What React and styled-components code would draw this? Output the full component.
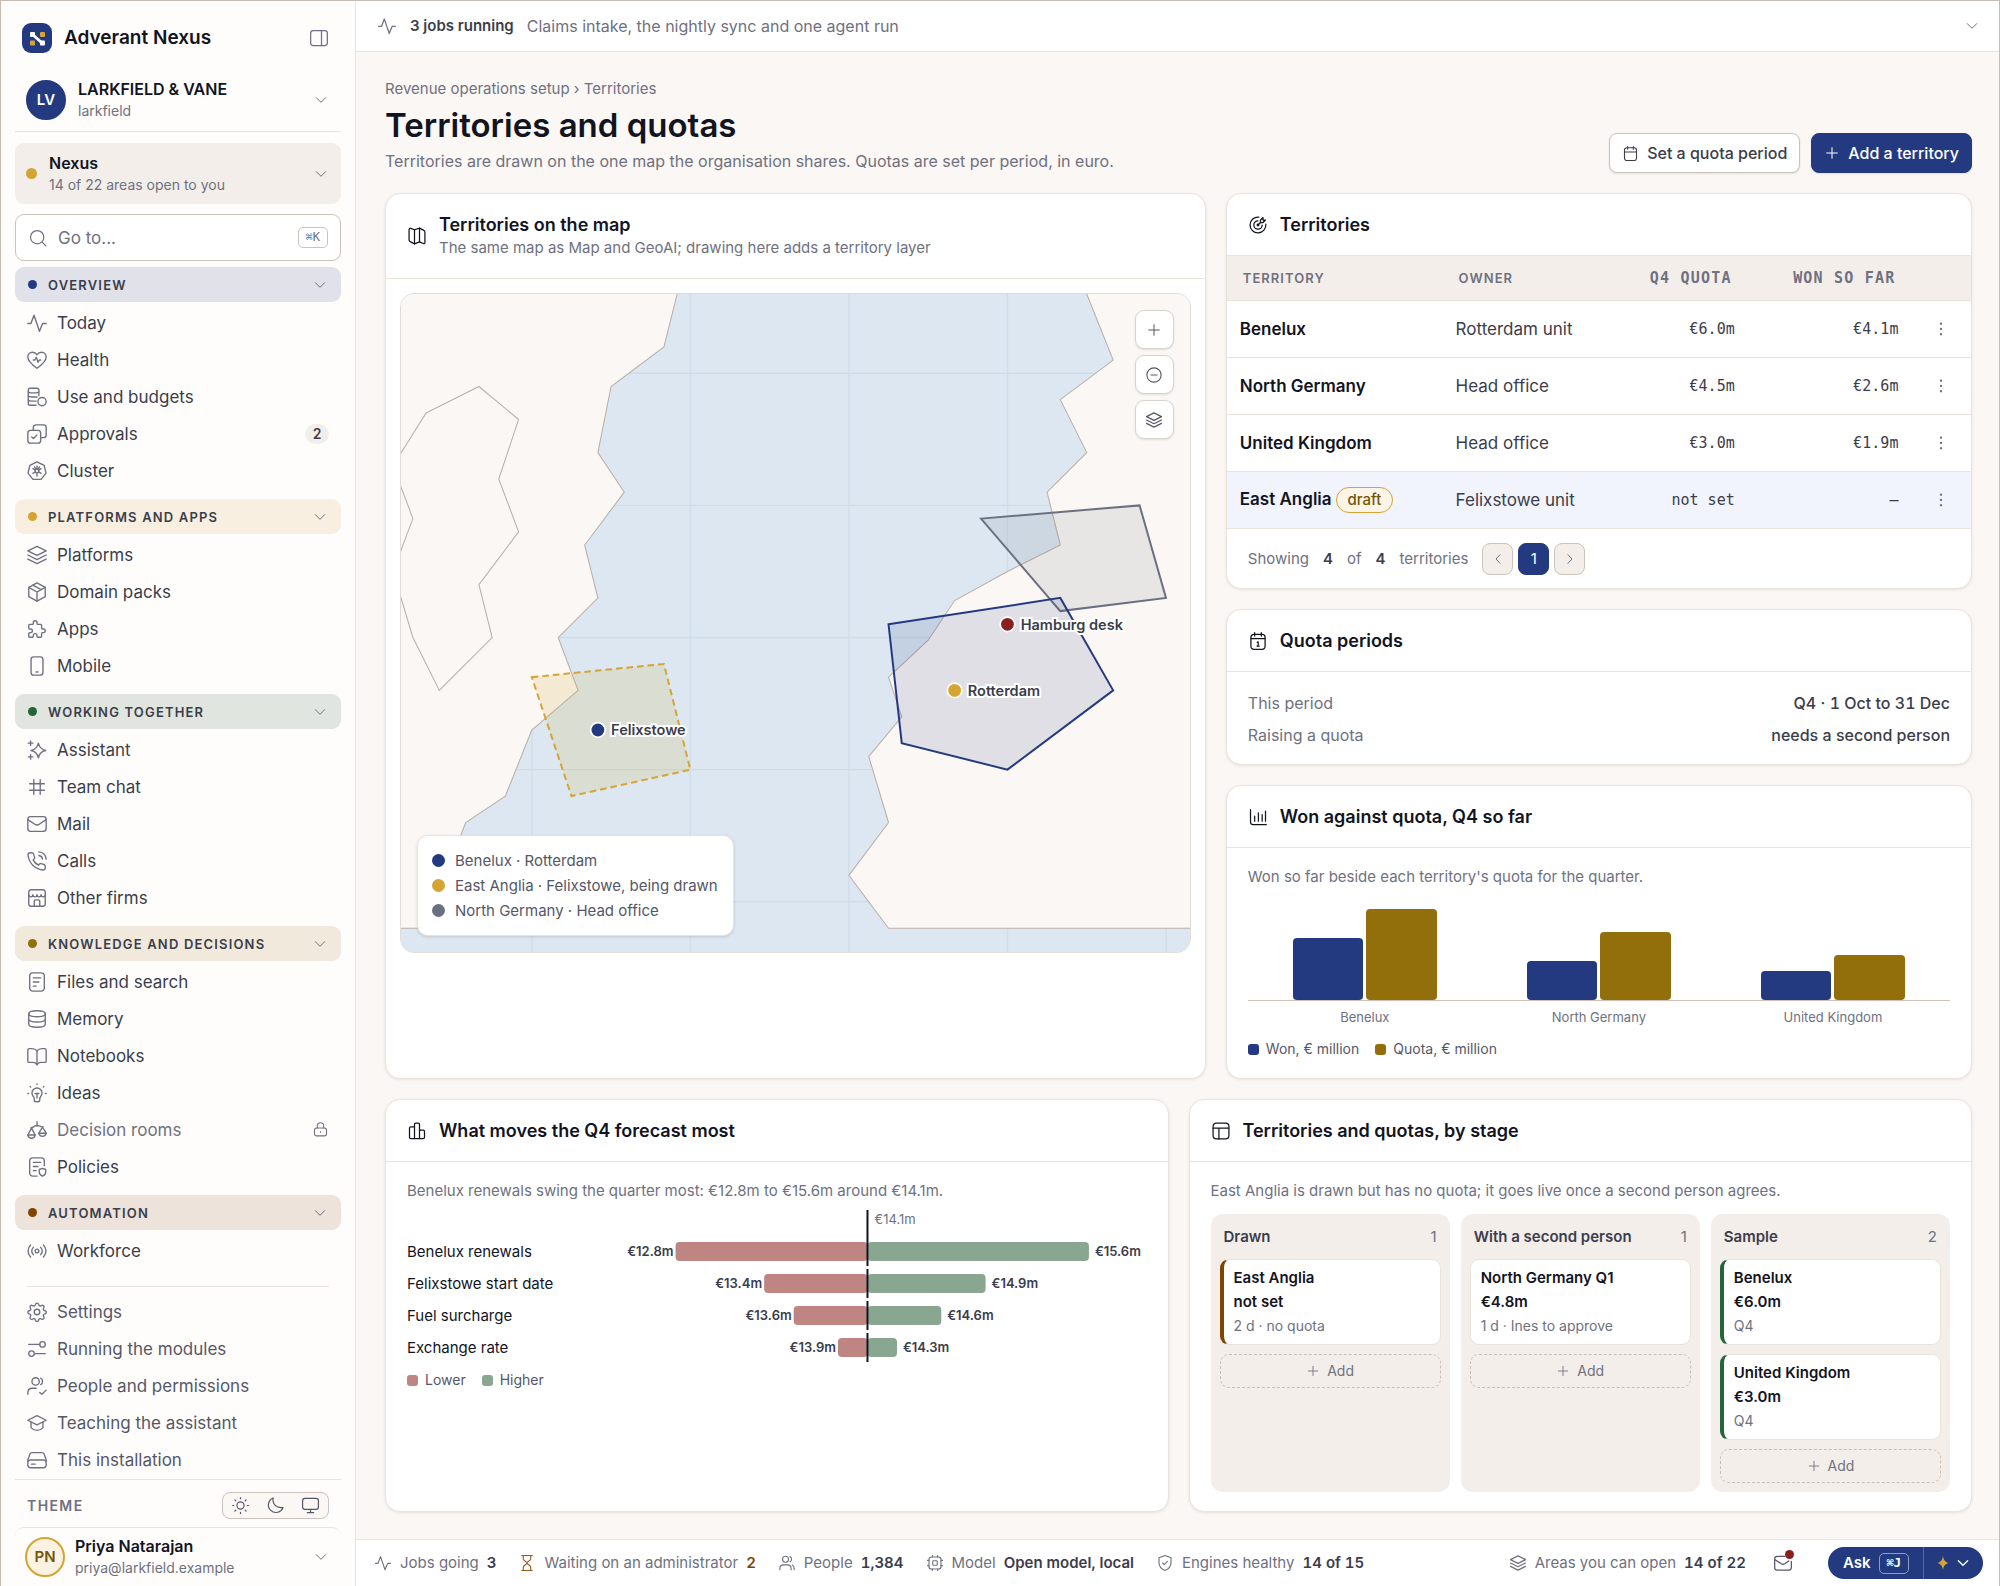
import React from "react";
import styled, { createGlobalStyle, css } from "styled-components";

const color = {
  ink: "#12141f",
  text: "#3b3d4b",
  soft: "#555766",
  muted: "#6f7180",
  line: "#e9e3de",
  lineStrong: "#cbc3bb",
  page: "#fbf7f4",
  panel: "#fefdfb",
  sunken: "#f3eeea",
  navy: "#243a80",
  gold: "#d4a533",
  olive: "#936f0b",
  green: "#24663a",
  brown: "#804300",
  slate: "#6b7080",
  red: "#8b1f1f",
};

const mono = `"DejaVu Sans Mono", "Liberation Mono", monospace`;

const GlobalStyle = createGlobalStyle`
  *, *::before, *::after { box-sizing: border-box; }
  body {
    margin: 0;
    background: ${color.page};
    color: ${color.text};
    font-family: Inter, "Liberation Sans", sans-serif;
    font-size: 16px;
    line-height: 24px;
  }
  button, input { font: inherit; color: inherit; }
  button { cursor: pointer; padding: 0; }
  h1, h2, h3, p, ul, dl, dd, table { margin: 0; padding: 0; }
  ul { list-style: none; }
  a { color: inherit; text-decoration: none; }
`;

/* ---------- icons ---------- */

const dot = (x, y, r = 1) => `M${x - r} ${y}a${r} ${r} 0 1 0 ${r * 2} 0a${r} ${r} 0 1 0 ${-r * 2} 0`;

const icons = {
  activity: ["M2 12.5h3.4l3.3-9 6 17.5 3.4-8.5H22"],
  heart: [
    "M12 21C7 17.5 2 13.4 2 8.8 2 5.6 4.4 3.5 7.1 3.5c2 0 3.8 1.1 4.9 2.7 1.1-1.6 2.9-2.7 4.9-2.7 2.7 0 5.1 2.1 5.1 5.3 0 4.6-5 8.7-10 12.2z",
    "M8 12h1.6l1.6-3 2 5.4 1.4-2.4H16",
  ],
  budget: [
    "M14 10.5V4.5c0-1.1-1-2-2.2-2H4.700c-1.200 0-2.200.9-2.200 2v14.500c0 1.100 1 2 2.200 2H11",
    "M2.500 6.500c1 .8 2 1 3.200 1h5c1.300 0 2.400-.2 3.300-1M2.500 11c1 .8 2 1 3.200 1H12M2.500 15.500c1 .8 2 1 3.200 1H11",
    dot(17.5, 17, 4.5),
  ],
  approvals: [
    "M5 8h8a3 3 0 0 1 3 3v8a3 3 0 0 1-3 3H5a3 3 0 0 1-3-3v-8a3 3 0 0 1 3-3z",
    "M8 8V5a3 3 0 0 1 3-3h8a3 3 0 0 1 3 3v8a3 3 0 0 1-3 3h-3",
    "M6.200 15.200l2 1.800 3.600-3.800",
  ],
  cluster: [
    "M12 2l7.800 3.800 2 8.500-5.400 6.900H7.600l-5.400-6.900 2-8.500z",
    "M12 6.500v3.500M12 14v3.500M7.500 9.500l2.800 1.500M13.700 13l2.800 1.500M16.500 9.500L13.700 11M10.300 13l-2.800 1.500M9.300 7.500l1.500 2.700M14.700 7.500l-1.500 2.700",
    dot(12, 12, 2),
  ],
  layers: ["M12 2.500l10 5-10 5-10-5z", "M2 12l10 5 10-5", "M2 16.500l10 5 10-5"],
  package: [
    "M12 2l9 5v10l-9 5-9-5V7z",
    "M3 7l9 5 9-5M12 12v10M7.500 4.500l9 5",
  ],
  puzzle: [
    "M4 7h3a1 1 0 0 0 1-1V5a2 2 0 0 1 4 0v1a1 1 0 0 0 1 1h3a1 1 0 0 1 1 1v3a1 1 0 0 0 1 1h1a2 2 0 0 1 0 4h-1a1 1 0 0 0-1 1v3a1 1 0 0 1-1 1h-3a1 1 0 0 1-1-1v-1a2 2 0 0 0-4 0v1a1 1 0 0 1-1 1H4a1 1 0 0 1-1-1v-3a1 1 0 0 1 1-1h1a2 2 0 0 0 0-4H4a1 1 0 0 1-1-1V8a1 1 0 0 1 1-1z",
  ],
  mobile: ["M8.500 2h7a3 3 0 0 1 3 3v14a3 3 0 0 1-3 3h-7a3 3 0 0 1-3-3V5a3 3 0 0 1 3-3z", "M11 18.500h2"],
  sparkles: [
    "M13.500 4.500c1 4.700 3.300 7 8 8-4.700 1-7 3.300-8 8-1-4.700-3.300-7-8-8 4.700-1 7-3.300 8-8z",
    "M5 2v5M2.500 4.500h5M5 17v5M2.500 19.500h5",
  ],
  hash: ["M8.500 4v16M15.500 4v16M4 8.500h16M4 15.500h16"],
  mail: ["M5 4h14a3 3 0 0 1 3 3v10a3 3 0 0 1-3 3H5a3 3 0 0 1-3-3V7a3 3 0 0 1 3-3z", "M2.500 7.500l7.500 5c1.300.8 2.700.8 4 0l7.500-5"],
  phone: [
    "M9.300 7.800L8.200 4.200C7.900 3.300 7.100 3 6.200 3H4.500C3 3 2 4.200 2.200 5.700 3.400 14.500 9.500 20.600 18.300 21.800c1.500.2 2.700-.8 2.700-2.300v-1.700c0-.9-.5-1.700-1.400-2l-3-1c-.8-.3-1.500 0-2 .6l-1 1.200c-2.500-1.200-4.600-3.300-5.800-5.800l1-.9c.6-.5.8-1.300.5-2.100z",
    "M14 2c4.500.3 7.700 3.500 8 8M14 6c2.300.3 3.700 1.700 4 4",
  ],
  store: [
    "M5.500 3h13A2.500 2.500 0 0 1 21 5.500v13a2.500 2.500 0 0 1-2.500 2.500h-13A2.500 2.500 0 0 1 3 18.500v-13A2.500 2.500 0 0 1 5.500 3z",
    "M3 8.500c0 3 4.500 3 4.500 0 0 3 4.500 3 4.500 0 0 3 4.500 3 4.500 0 0 3 4.500 3 4.500 0M9 21v-5.500c0-.8.500-1.500 1.500-1.500h3c1 0 1.500.7 1.500 1.500V21",
  ],
  file: ["M7.500 2h9a3.500 3.500 0 0 1 3.500 3.500v13a3.500 3.500 0 0 1-3.500 3.500h-9A3.500 3.500 0 0 1 4 18.500v-13A3.500 3.500 0 0 1 7.500 2z", "M8 7.500h8M8 12h6M8 16.500h3"],
  database: [
    "M12 3c5 0 9 1.300 9 3.200s-4 3.300-9 3.300-9-1.400-9-3.300S7 3 12 3z",
    "M3 6.200v11.600C3 19.700 7 21 12 21s9-1.300 9-3.200V6.200M3 12c0 1.900 4 3.300 9 3.300s9-1.400 9-3.300",
  ],
  book: [
    "M12 6.500C11 5 9 4 6.500 4H3.500C2.700 4 2 4.600 2 5.400v12.200c0 .8.700 1.400 1.500 1.400h4c2 0 3.700.7 4.500 2.500.8-1.800 2.500-2.500 4.500-2.500h4c.8 0 1.500-.6 1.500-1.400V5.400c0-.8-.7-1.400-1.500-1.400h-3C15 4 13 5 12 6.500z",
    "M12 6.500v15",
  ],
  idea: [
    "M9 18c0-1.700-2.500-2.800-2.500-6a5.500 5.500 0 0 1 11 0c0 3.200-2.500 4.300-2.500 6v1.500c0 1.200-.8 2-2 2h-2c-1.200 0-2-.8-2-2z",
    "M12 2v.8M4.500 5l.6.6M19.500 5l-.6.6M2 12.500h.8M21.200 12.500h.8M10 12.500h4M12 12.500V17.500",
  ],
  scales: [
    "M12 3v5M5.500 9.500C8 9.500 9.500 7 12 7s4 2 6.500 1.500",
    "M6 10l-4 7.500h8zM18 9l-4 6.500h8z",
    "M2 17.500c.5 2.400 2 3.500 4 3.500s3.500-1.100 4-3.500M14 15.500c.5 2.400 2 3.500 4 3.500s3.500-1.100 4-3.500",
  ],
  policy: [
    "M20 10.500V5.500A3.500 3.500 0 0 0 16.500 2h-9A3.500 3.500 0 0 0 4 5.500v13A3.500 3.500 0 0 0 7.500 22H12",
    "M8 7h8M8 11.500h5M8 16h3",
    "M18 13.500l3.500 1.200v3c0 2-1.300 3.300-3.500 4.300-2.200-1-3.500-2.300-3.500-4.300v-3z",
  ],
  lock: ["M6.500 10h11a3 3 0 0 1 3 3v5a3 3 0 0 1-3 3h-11a3 3 0 0 1-3-3v-5a3 3 0 0 1 3-3z", "M7.500 10V7a4.500 4.500 0 0 1 9 0v3M12 15v1"],
  radio: [
    dot(12, 12, 2),
    "M8 8c-2 2.300-2 5.700 0 8M16 8c2 2.300 2 5.700 0 8M5 5.500c-3.700 3.700-3.700 9.300 0 13M19 5.500c3.700 3.700 3.700 9.300 0 13",
  ],
  settings: [
    "M10.300 3.600c.5-1.700 2.900-1.700 3.400 0l.3.800c.3 1 1.400 1.400 2.300.9l.8-.4c1.600-.8 3.200.9 2.400 2.400l-.4.800c-.5.9 0 2 .9 2.300l.8.200c1.700.5 1.700 2.900 0 3.400l-.8.300c-1 .3-1.400 1.400-.9 2.300l.4.800c.8 1.600-.8 3.200-2.400 2.400l-.8-.4c-.9-.5-2 0-2.300.9l-.3.800c-.5 1.700-2.900 1.700-3.400 0l-.2-.8c-.3-1-1.400-1.400-2.300-.9l-.8.400c-1.600.8-3.200-.8-2.400-2.400l.4-.8c.5-.9 0-2-.9-2.300l-.8-.3c-1.700-.5-1.700-2.900 0-3.400l.8-.2c1-.3 1.400-1.400.9-2.300l-.4-.8c-.8-1.500.8-3.200 2.400-2.400l.8.400c.9.500 2 0 2.300-.9z",
    dot(12, 12, 3),
  ],
  sliders: ["M3 7h12M21 17H9.500", dot(18, 7, 3), dot(6, 17, 3)],
  usersCheck: [dot(10.500, 7, 4), "M2 21v-1.500c0-3 2-5 5-5h4", "M16 3.500c2.700 1 2.700 6 0 7M15 19l2.300 2L22 16.500"],
  school: ["M12 4l10 5-10 5L2 9z", "M5.500 11v6c3.500 4 9.500 4 13 0v-6"],
  drive: [
    "M6.500 4h11c1 0 1.700.4 2.200 1.300L22 12v5.500a3 3 0 0 1-3 3H5a3 3 0 0 1-3-3V12l2.300-6.700C4.800 4.400 5.500 4 6.500 4z",
    "M2 13.500c.6-1 1.700-1.500 3-1.500h14c1.300 0 2.400.5 3 1.500M6 16.500h4",
  ],
  panel: ["M5 3h14a3 3 0 0 1 3 3v12a3 3 0 0 1-3 3H5a3 3 0 0 1-3-3V6a3 3 0 0 1 3-3z", "M15 3v18"],
  chevron: ["M5 8.500l7 7 7-7"],
  left: ["M15 5.500L9 12l6 6.500"],
  right: ["M9 5.500l6 6.500-6 6.500"],
  search: [dot(11, 11, 8), "M17 17l4.500 4.500"],
  sun: [dot(12, 12, 4.5), "M12 2v1.500M12 20.500V22M2 12h1.500M20.500 12H22M4.900 4.900L6 6M18 18l1.100 1.100M4.900 19.100L6 18M18 6l1.100-1.100"],
  moon: ["M21.500 14.500A9.500 9.500 0 1 1 9 2.500c-1.500 7.500 4.500 13.500 12.500 12z"],
  monitor: ["M5 3h14a3 3 0 0 1 3 3v8a3 3 0 0 1-3 3H5a3 3 0 0 1-3-3V6a3 3 0 0 1 3-3z", "M12 17v4M8 21h8"],
  calendar: ["M7 4h10a3.500 3.500 0 0 1 3.500 3.500v11A3.500 3.500 0 0 1 17 22H7a3.500 3.500 0 0 1-3.500-3.500v-11A3.500 3.500 0 0 1 7 4z", "M8 2v4M16 2v4M3.500 10h17"],
  calendarOne: [
    "M7 4h10a3.500 3.500 0 0 1 3.500 3.500v11A3.500 3.500 0 0 1 17 22H7a3.500 3.500 0 0 1-3.500-3.500v-11A3.500 3.500 0 0 1 7 4z",
    "M8 2v4M16 2v4M3.500 9h17M11 13.500l1.200-.5v5M10.800 18h2.700",
  ],
  plus: ["M12 4v16M4 12h16"],
  map: [
    "M9 4.500L4.500 2.800C3.400 2.400 2.500 3 2.500 4.200v12.600c0 1 .4 1.600 1.300 2L9 21.500l6-2.500 4.500 2c1.100.4 2-.2 2-1.400V7.200c0-1-.4-1.600-1.300-2L15 2.500z",
    "M9 4.500v17M15 2.500V19",
  ],
  target: [dot(12, 12, 1), "M12 7a5 5 0 1 0 5 5", "M13 2.600a9.500 9.500 0 1 0 8.400 8.400", "M15 6v3h3l3-3h-3V3z", "M15 9l-3 3"],
  zoomOut: [dot(12, 12, 9.5), "M8 12h8"],
  more: [dot(12, 5, 0.8), dot(12, 12, 0.8), dot(12, 19, 0.8)],
  chart: ["M3 3v15c0 2 1 3 3 3h16", "M8 17v-6M12.500 17V7M17 17V9M21 17V5"],
  blocks: ["M9 21V4c0-1 .6-1.500 1.500-1.500h3c.9 0 1.500.5 1.500 1.500v17", "M9 7H4.500C3.600 7 3 7.500 3 8.500v11c0 1 .6 1.500 1.500 1.500h15c.9 0 1.500-.5 1.500-1.500v-7c0-1-.6-1.500-1.500-1.500H15"],
  layout: ["M6.500 2.500h11a4 4 0 0 1 4 4v11a4 4 0 0 1-4 4h-11a4 4 0 0 1-4-4v-11a4 4 0 0 1 4-4z", "M2.500 8.500h19M9.500 8.500v13"],
  hourglass: ["M5 2h14M5 22h14M7 2v4.500c0 2 5 4 5 5.500s-5 3.500-5 5.500V22M17 2v4.500c0 2-5 4-5 5.500s5 3.500 5 5.500V22"],
  users: [dot(10, 7, 4), "M2.500 21v-1.500c0-3 2-5 5-5h5c3 0 5 2 5 5V21", "M16 3.500c2.700 1 2.700 6 0 7M19 14.800c1.800.8 2.500 2.300 2.500 4.200v2"],
  cpu: [
    "M7.500 4h9A3.500 3.500 0 0 1 20 7.500v9a3.500 3.500 0 0 1-3.500 3.500h-9A3.500 3.500 0 0 1 4 16.500v-9A3.500 3.500 0 0 1 7.500 4z",
    "M10 9h4a1 1 0 0 1 1 1v4a1 1 0 0 1-1 1h-4a1 1 0 0 1-1-1v-4a1 1 0 0 1 1-1zM8.500 4V2M15.500 4V2M8.500 22v-2M15.500 22v-2M2 8.500h2M2 15.500h2M20 8.500h2M20 15.500h2",
  ],
  shield: ["M12 2l8 3v6.500c0 5-3 8.300-8 10.500-5-2.200-8-5.500-8-10.500V5z", "M8.800 12l2.200 2.200 4.200-4.400"],
  mailOpen: ["M14 4H5a3 3 0 0 0-3 3v10.500a3 3 0 0 0 3 3h14a3 3 0 0 0 3-3V10", "M2.500 8l7.500 5c1.300.8 2.700.8 4 0l5-3.400"],
};

const Svg = styled.svg`
  display: block;
  flex: none;
  fill: none;
  stroke: currentColor;
  stroke-linecap: round;
  stroke-linejoin: round;
`;

const Icon = ({ name, size = 22, weight = 1.5 }) => (
  <Svg width={size} height={size} viewBox="0 0 24 24" strokeWidth={weight} aria-hidden="true">
    {icons[name].map((d) => (
      <path key={d} d={d} />
    ))}
  </Svg>
);

const Logo = () => (
  <svg width="30" height="30" viewBox="0 0 30 30" aria-hidden="true">
    <rect width="30" height="30" rx="9" fill={color.navy} />
    <path d="M9.500 10.500L20.500 20.500" stroke="#fff" strokeWidth="3" />
    <rect x="8" y="9" width="5" height="5" rx="1" fill="#fff" />
    <rect x="18" y="17.500" width="5" height="5" rx="1" fill="#fff" />
    <rect x="18" y="9" width="5" height="5" rx="1" fill={color.gold} />
    <rect x="8" y="17.500" width="5" height="5" rx="1" fill={color.gold} />
  </svg>
);

/* ---------- shell ---------- */

const Shell = styled.div`
  display: flex;
  min-height: 100vh;
  border: 1px solid #c8bbb6;
  border-bottom: 0;
`;

const Sidebar = styled.aside`
  flex: 0 0 355px;
  min-width: 0;
  display: flex;
  flex-direction: column;
  padding: 0 14px;
  background: ${color.panel};
  border-right: 1px solid ${color.line};
`;

const Brand = styled.div`
  display: flex;
  align-items: center;
  gap: 12px;
  height: 68px;
  padding: 6px 12px 0 7px;
  font-size: 19px;
  font-weight: 600;
  color: ${color.ink};
`;

const IconButton = styled.button`
  display: flex;
  margin-left: auto;
  border: 0;
  background: none;
  color: ${color.muted};
`;

const Switcher = styled.button`
  display: flex;
  align-items: center;
  gap: 12px;
  width: 100%;
  padding: 0 12px;
  border: 0;
  background: none;
  text-align: left;
  color: ${color.muted};

  ${({ $kind }) =>
    $kind === "org" &&
    css`
      height: 63px;
      padding-left: 11px;
      border-bottom: 1px solid ${color.line};
    `}
  ${({ $kind }) =>
    $kind === "area" &&
    css`
      height: 61px;
      margin: 11px 0 10px;
      padding-left: 11px;
      border-radius: 9px;
      background: ${color.sunken};
    `}
  ${({ $kind }) =>
    $kind === "user" &&
    css`
      height: 59px;
      border-top: 1px solid ${color.line};
      border-radius: 9px 9px 0 0;
      padding-left: 10px;
      gap: 10px;
    `}
`;

const SwitcherText = styled.span`
  flex: 1;
  display: flex;
  flex-direction: column;
  font-size: 14px;
  line-height: 22px;

  strong {
    font-size: 16px;
    font-weight: 600;
    color: ${color.ink};
  }
`;

const Avatar = styled.span`
  display: grid;
  place-items: center;
  width: 40px;
  height: 40px;
  border-radius: 50%;
  font-size: 15px;
  font-weight: 600;
  color: ${({ $outline }) => ($outline ? "#735608" : "#fff")};
  background: ${({ $outline }) => ($outline ? "#fbf2e2" : color.navy)};
  border: 2px solid ${({ $outline }) => ($outline ? color.gold : color.navy)};
`;

const Dot = styled.span`
  flex: none;
  width: ${({ $size }) => $size || 9}px;
  height: ${({ $size }) => $size || 9}px;
  border-radius: 50%;
  background: ${({ $color }) => $color};
`;

const Search = styled.label`
  display: flex;
  align-items: center;
  gap: 10px;
  height: 47px;
  padding: 0 12px;
  border: 1px solid ${color.lineStrong};
  border-radius: 9px;
  background: #fff;
  color: ${color.muted};

  input {
    flex: 1;
    width: 0;
    min-width: 0;
    padding: 0;
    border: 0;
    outline: 0;
    background: none;
    font-size: 17px;
  }
  input::placeholder { color: ${color.muted}; opacity: 1; }
`;

const Kbd = styled.kbd`
  padding: 0 7px;
  border: 1px solid ${({ $light }) => ($light ? "#8f9bc4" : color.lineStrong)};
  border-radius: 5px;
  font-family: ${mono};
  font-size: 12px;
  line-height: 19px;
`;

const Nav = styled.nav`
  margin-top: 6px;
`;

const Group = styled.section`
  padding-bottom: 10px;
`;

const GroupButton = styled.button`
  display: flex;
  align-items: center;
  gap: 11px;
  width: 100%;
  height: 35px;
  margin-bottom: 2px;
  padding: 0 13px;
  border: 0;
  border-radius: 9px;
  background: ${({ $tint }) => $tint};
  font-size: 13px;
  font-weight: 600;
  letter-spacing: 0.09em;
  text-transform: uppercase;

  svg { margin-left: auto; color: ${color.muted}; }
`;

const NavLink = styled.a`
  display: flex;
  align-items: center;
  gap: 9px;
  height: 37px;
  padding: 0 12px 0 11px;
  font-size: 17px;
  color: ${({ $quiet }) => ($quiet ? color.soft : color.text)};
  ${({ $locked }) => $locked && `color: ${color.muted};`}

  svg { color: ${color.muted}; }
  span { flex: 1; }
`;

const Count = styled.b`
  min-width: 24px;
  border-radius: 10px;
  background: ${color.sunken};
  font-size: 14px;
  font-weight: 600;
  line-height: 20px;
  text-align: center;
`;

const Divider = styled.hr`
  height: 1px;
  margin: 7px 12px 6px;
  border: 0;
  background: ${color.line};
`;

const ThemeRow = styled.div`
  display: flex;
  align-items: center;
  justify-content: space-between;
  height: 48px;
  margin-top: auto;
  padding: 4px 12px 0;
  border-top: 1px solid ${color.line};
  font-size: 14px;
  font-weight: 600;
  letter-spacing: 0.1em;
  color: ${color.muted};
`;

const ThemeSwitch = styled.div`
  display: flex;
  border: 1px solid ${color.lineStrong};
  border-radius: 8px;
  background: ${color.page};

  button {
    display: grid;
    place-items: center;
    width: 35px;
    height: 25px;
    border: 0;
    background: none;
    color: ${color.soft};
  }
`;

const Main = styled.div`
  flex: 1;
  min-width: 0;
  display: flex;
  flex-direction: column;
`;

const JobsBar = styled.div`
  display: flex;
  align-items: center;
  gap: 13px;
  height: 51px;
  padding: 0 19px 0 21px;
  border-bottom: 1px solid ${color.line};
  background: #fff;
  color: ${color.muted};

  strong { font-weight: 600; font-size: 15px; color: ${color.text}; }
`;

const Content = styled.main`
  flex: 1;
  padding: 27px 27px 26px 29px;
`;

const PageHead = styled.header`
  display: flex;
  align-items: flex-end;
  justify-content: space-between;
  margin-bottom: 20px;
`;

const Crumbs = styled.nav`
  font-size: 15px;
  line-height: 20px;
  color: ${color.muted};
`;

const Title = styled.h1`
  margin: 6px 0 3px;
  font-size: 33px;
  font-weight: 600;
  line-height: 41px;
  color: ${color.ink};
`;

const Lead = styled.p`
  color: ${color.muted};
`;

const Actions = styled.div`
  display: flex;
  gap: 11px;
`;

const Button = styled.button`
  display: flex;
  align-items: center;
  gap: 8px;
  height: 40px;
  padding: 0 12px;
  border: 1px solid ${({ $primary }) => ($primary ? color.navy : color.lineStrong)};
  border-radius: 8px;
  background: ${({ $primary }) => ($primary ? color.navy : "#fff")};
  color: ${({ $primary }) => ($primary ? "#fff" : color.text)};
  font-weight: 500;
  box-shadow: 0 1px 2px rgba(60, 40, 30, 0.12);
`;

/* ---------- cards ---------- */

const Columns = styled.div`
  display: grid;
  grid-template-columns: ${({ $template }) => $template};
  gap: 20px;
  margin-bottom: ${({ $last }) => ($last ? 0 : 20)}px;
`;

const Stack = styled.div`
  display: flex;
  flex-direction: column;
  gap: 20px;
`;

const Card = styled.section`
  min-width: 0;
  border: 1px solid ${color.line};
  border-radius: 15px;
  background: #fff;
  box-shadow: 0 1px 3px rgba(60, 40, 30, 0.1);
  overflow: hidden;
`;

const CardHead = styled.header`
  display: flex;
  align-items: center;
  gap: 12px;
  min-height: 62px;
  padding: 0 21px;
  border-bottom: 1px solid ${color.line};
  color: ${color.ink};

  h2 { font-size: 18px; font-weight: 600; line-height: 24px; }
  p { font-size: 15px; line-height: 22px; color: ${color.muted}; }
`;

const TallHead = styled(CardHead)`
  min-height: 85px;
`;

const CardBody = styled.div`
  padding: 18px 21px 19px;
`;

const Note = styled.p`
  font-size: 15px;
  line-height: 22px;
  color: ${color.muted};
`;

const Legend = styled.ul`
  display: flex;
  gap: 16px;
  margin-top: ${({ $top }) => $top}px;
  font-size: 14px;
  line-height: 20px;
  color: ${color.soft};

  li { display: flex; align-items: center; gap: 7px; }
`;

const Swatch = styled.i`
  width: 11px;
  height: 11px;
  border-radius: 3px;
  background: ${({ $color }) => $color};
`;

/* ---------- map ---------- */

const MapFrame = styled.div`
  position: relative;
  margin: 14px;
  border: 1px solid #dfdcd9;
  border-radius: 14px;
  overflow: hidden;

  > svg { display: block; width: 100%; height: auto; }
`;

const PinLabel = styled.text`
  font-size: 11px;
  font-weight: 600;
  fill: ${color.text};
  stroke: #fff;
  stroke-width: 3px;
  paint-order: stroke;
`;

const MapTools = styled.div`
  position: absolute;
  top: 16px;
  right: 16px;
  display: flex;
  flex-direction: column;
  gap: 6px;

  button {
    display: grid;
    place-items: center;
    width: 39px;
    height: 39px;
    border: 1px solid #d9d3cd;
    border-radius: 9px;
    background: #fff;
    color: ${color.soft};
    box-shadow: 0 1px 2px rgba(60, 40, 30, 0.12);
  }
`;

const MapLegend = styled.ul`
  position: absolute;
  left: 16px;
  bottom: 16px;
  padding: 12px 15px 12px 14px;
  border: 1px solid ${color.line};
  border-radius: 11px;
  background: #fff;
  box-shadow: 0 1px 3px rgba(60, 40, 30, 0.16);
  font-size: 15px;
  line-height: 25px;
  color: ${color.soft};

  li { display: flex; align-items: center; gap: 10px; }
`;

const lands = [
  "-5,-5 211,-5 210,0 200,40 160,70 150,120 170,150 140,190 150,230 120,260 135,300 100,330 80,380 50,400 18,480 -5,480",
  "20,90 60,70 90,95 75,140 90,180 60,220 70,260 30,300 10,260 -5,210 10,170 -5,130",
  "605,-5 518,-5 520,0 540,50 500,80 520,120 490,150 500,190 460,210 420,232 400,262 370,290 380,320 355,350 370,400 340,440 370,480 605,480",
];

const areas = [
  { name: "North Germany", points: "440,170 560,160 580,230 500,240", stroke: color.slate },
  { name: "Benelux", points: "370,250 500,230 540,300 460,360 380,340", stroke: color.navy },
  { name: "East Anglia", points: "100,290 200,280 220,360 130,380", stroke: color.gold, dash: "5 3" },
];

const pins = [
  { name: "Hamburg desk", x: 460, y: 250, fill: color.red },
  { name: "Rotterdam", x: 420, y: 300, fill: color.gold },
  { name: "Felixstowe", x: 150, y: 330, fill: color.navy },
];

const TerritoryMap = () => (
  <MapFrame>
    <svg viewBox="1 0 597 498" role="img" aria-label="Territories around the North Sea">
      <rect width="600" height="500" fill="#dce7f1" />
      {[100, 220, 340, 460, 580].map((x) => (
        <path key={x} d={`M${x} 0V500`} stroke="#cfdde8" />
      ))}
      {[60, 160, 260, 360, 460].map((y) => (
        <path key={y} d={`M0 ${y}H600`} stroke="#cfdde8" />
      ))}
      {lands.map((points) => (
        <polygon key={points} points={points} fill={color.page} stroke="#b9b1a8" strokeWidth="0.8" />
      ))}
      {areas.map((a) => (
        <polygon
          key={a.name}
          points={a.points}
          fill={a.stroke}
          fillOpacity={a.dash ? 0.16 : 0.13}
          stroke={a.stroke}
          strokeWidth="1.5"
          strokeDasharray={a.dash}
        />
      ))}
      {pins.map((p) => (
        <g key={p.name}>
          <circle cx={p.x} cy={p.y} r="5.5" fill={p.fill} stroke="#fff" strokeWidth="1.3" />
          <PinLabel x={p.x + 10} y={p.y + 4}>{p.name}</PinLabel>
        </g>
      ))}
    </svg>
    <MapTools>
      <button aria-label="Zoom in"><Icon name="plus" size={16} /></button>
      <button aria-label="Zoom out"><Icon name="zoomOut" size={18} /></button>
      <button aria-label="Layers"><Icon name="layers" size={18} /></button>
    </MapTools>
    <MapLegend>
      <li><Dot $size={13} $color={color.navy} />Benelux · Rotterdam</li>
      <li><Dot $size={13} $color={color.gold} />East Anglia · Felixstowe, being drawn</li>
      <li><Dot $size={13} $color={color.slate} />North Germany · Head office</li>
    </MapLegend>
  </MapFrame>
);

/* ---------- territories table ---------- */

const Table = styled.table`
  width: 100%;
  table-layout: fixed;
  border-collapse: separate;
  border-spacing: 0;
  font-size: 17px;

  th, td {
    padding: 0 13px;
    border-bottom: 1px solid ${color.line};
    text-align: left;
    font-weight: 400;
  }
  thead th {
    height: 45px;
    padding: 0 16px;
    background: ${color.sunken};
    color: ${color.muted};
    font-size: 13px;
    font-weight: 600;
    letter-spacing: 0.08em;
    text-transform: uppercase;
  }
  tbody th, td { height: 57px; }
  tbody th { font-weight: 600; color: ${color.ink}; white-space: nowrap; }
  .num {
    font-family: ${mono};
    font-size: 15px;
    text-align: right;
  }
  thead th.num { font-size: 15px; }
  td button { margin: 0 auto; }
`;

const Row = styled.tr`
  background: ${({ $selected }) => ($selected ? "#f1f3fd" : "#fff")};
`;

const Badge = styled.span`
  display: inline-block;
  margin-left: 4px;
  padding: 0 11px;
  border: 1px solid ${color.gold};
  border-radius: 13px;
  background: #fcf5e7;
  color: #735608;
  font-size: 15px;
  font-weight: 500;
`;

const Pager = styled.div`
  display: flex;
  align-items: center;
  gap: 14px;
  height: 59px;
  padding: 0 21px;
  font-size: 15px;
  color: ${color.muted};

  b { font-weight: 600; color: ${color.text}; }
  div { display: flex; gap: 5px; }
`;

const PageButton = styled.button`
  display: grid;
  place-items: center;
  width: 31px;
  height: 32px;
  border: 1px solid ${({ $on }) => ($on ? color.navy : color.lineStrong)};
  border-radius: 8px;
  background: ${({ $on }) => ($on ? color.navy : color.sunken)};
  color: ${({ $on }) => ($on ? "#fff" : color.muted)};
`;

const rows = [
  { name: "Benelux", owner: "Rotterdam unit", quota: "€6.0m", won: "€4.1m" },
  { name: "North Germany", owner: "Head office", quota: "€4.5m", won: "€2.6m" },
  { name: "United Kingdom", owner: "Head office", quota: "€3.0m", won: "€1.9m" },
  { name: "East Anglia", owner: "Felixstowe unit", quota: "not set", won: "–", draft: true },
];

const Territories = () => (
  <Card>
    <CardHead><Icon name="target" size={20} /><h2>Territories</h2></CardHead>
    <Table>
      <colgroup>
        <col width="29%" /><col width="20%" /><col width="21%" /><col width="22%" /><col width="8%" />
      </colgroup>
      <thead>
        <tr>
          <th scope="col">Territory</th>
          <th scope="col">Owner</th>
          <th scope="col" className="num">Q4 quota</th>
          <th scope="col" className="num">Won so far</th>
          <th aria-label="Actions" />
        </tr>
      </thead>
      <tbody>
        {rows.map((r) => (
          <Row key={r.name} $selected={r.draft}>
            <th scope="row">{r.name}{r.draft && <Badge>draft</Badge>}</th>
            <td>{r.owner}</td>
            <td className="num">{r.quota}</td>
            <td className="num">{r.won}</td>
            <td><IconButton aria-label={`Actions for ${r.name}`}><Icon name="more" size={18} /></IconButton></td>
          </Row>
        ))}
      </tbody>
    </Table>
    <Pager>
      <span>Showing</span><b>4</b><span>of</span><b>4</b><span>territories</span>
      <div>
        <PageButton aria-label="Previous page"><Icon name="left" size={16} /></PageButton>
        <PageButton $on>1</PageButton>
        <PageButton aria-label="Next page"><Icon name="right" size={16} /></PageButton>
      </div>
    </Pager>
  </Card>
);

/* ---------- quota periods ---------- */

const Facts = styled.dl`
  padding: 15px 21px 13px;
  line-height: 32px;

  div { display: flex; justify-content: space-between; }
  dt { color: ${color.muted}; }
  dd { font-weight: 500; font-variant-numeric: tabular-nums; }
`;

/* ---------- bar chart ---------- */

const Bars = styled.div`
  display: grid;
  grid-template-columns: repeat(3, 1fr);
  margin-top: 21px;
  border-bottom: 1px solid #d3c2b8;
`;

const BarPair = styled.div`
  display: flex;
  align-items: flex-end;
  justify-content: center;
  gap: 3px;
  height: 91px;
`;

const Bar = styled.div`
  width: 30%;
  border-radius: 4px;
  background: ${({ $color }) => $color};
`;

const BarLabels = styled.div`
  display: grid;
  grid-template-columns: repeat(3, 1fr);
  margin-top: 7px;
  font-size: 13px;
  line-height: 18px;
  text-align: center;
  color: ${color.muted};
`;

const results = [
  { name: "Benelux", won: 4.1, quota: 6 },
  { name: "North Germany", won: 2.6, quota: 4.5 },
  { name: "United Kingdom", won: 1.9, quota: 3 },
];

const WonChart = () => (
  <Card>
    <CardHead><Icon name="chart" size={20} /><h2>Won against quota, Q4 so far</h2></CardHead>
    <CardBody>
      <Note>Won so far beside each territory's quota for the quarter.</Note>
      <Bars>
        {results.map((r) => (
          <BarPair key={r.name}>
            <Bar $color={color.navy} style={{ height: `${(r.won / 6) * 100}%` }} />
            <Bar $color={color.olive} style={{ height: `${(r.quota / 6) * 100}%` }} />
          </BarPair>
        ))}
      </Bars>
      <BarLabels>
        {results.map((r) => <span key={r.name}>{r.name}</span>)}
      </BarLabels>
      <Legend $top={13}>
        <li><Swatch $color={color.navy} />Won, € million</li>
        <li><Swatch $color={color.olive} />Quota, € million</li>
      </Legend>
    </CardBody>
  </Card>
);

/* ---------- tornado chart ---------- */

const Tornado = styled.div`
  display: grid;
  grid-template-columns: 216px 1fr;
  row-gap: 3px;
  font-size: 15px;
  line-height: 29px;
  color: ${color.ink};

  svg { display: block; width: 100%; height: 29px; overflow: visible; }
`;

const TornadoScale = styled(Tornado)`
  margin-top: 8px;

  svg { height: 27px; }
`;

const ValueText = styled.text`
  font-size: 13px;
  font-weight: ${({ $light }) => ($light ? 400 : 600)};
  fill: ${({ $light }) => ($light ? color.muted : color.text)};
`;

const BASE = 14.1;
const at = (value) => 46.7 + (value - BASE) * 28.2;

const drivers = [
  { name: "Benelux renewals", low: 12.8, high: 15.6 },
  { name: "Felixstowe start date", low: 13.4, high: 14.9 },
  { name: "Fuel surcharge", low: 13.6, high: 14.6 },
  { name: "Exchange rate", low: 13.9, high: 14.3 },
];

const Forecast = () => (
  <Card>
    <CardHead><Icon name="blocks" size={20} /><h2>What moves the Q4 forecast most</h2></CardHead>
    <CardBody>
      <Note>Benelux renewals swing the quarter most: €12.8m to €15.6m around €14.1m.</Note>
      <TornadoScale>
        <span />
        <svg>
          <line x1={`${at(BASE)}%`} x2={`${at(BASE)}%`} y1="0" y2="27" stroke={color.ink} strokeWidth="2" />
          <ValueText $light x={`${at(BASE)}%`} dx="7" y="14">€14.1m</ValueText>
        </svg>
      </TornadoScale>
      <Tornado>
        {drivers.map((d) => (
          <React.Fragment key={d.name}>
            <span>{d.name}</span>
            <svg>
              <rect x={`${at(d.low)}%`} width={`${at(BASE) - at(d.low)}%`} y="5" height="19" rx="4" fill="#be8582" />
              <rect x={`${at(BASE)}%`} width={`${at(d.high) - at(BASE)}%`} y="5" height="19" rx="4" fill="#89a790" />
              <line x1={`${at(BASE)}%`} x2={`${at(BASE)}%`} y1="0" y2="29" stroke={color.ink} strokeWidth="2" />
              <ValueText x={`${at(d.low)}%`} dx="-2" y="19" textAnchor="end">{`€${d.low}m`}</ValueText>
              <ValueText x={`${at(d.high)}%`} dx="6" y="19">{`€${d.high}m`}</ValueText>
            </svg>
          </React.Fragment>
        ))}
      </Tornado>
      <Legend $top={8}>
        <li><Swatch $color="#be8582" />Lower</li>
        <li><Swatch $color="#89a790" />Higher</li>
      </Legend>
    </CardBody>
  </Card>
);

/* ---------- stage board ---------- */

const Board = styled.div`
  display: grid;
  grid-template-columns: repeat(3, 1fr);
  gap: 11px;
  margin-top: 12px;
`;

const Lane = styled.section`
  display: flex;
  flex-direction: column;
  gap: 9px;
  padding: 9px;
  border-radius: 12px;
  background: ${color.sunken};
`;

const LaneHead = styled.header`
  display: flex;
  justify-content: space-between;
  padding: 0 4px;
  font-size: 15px;
  line-height: 27px;
  color: ${color.muted};

  h3 { font-size: 15px; font-weight: 600; color: ${color.text}; }
`;

const StageCard = styled.article`
  padding: 6px 12px 6px 10px;
  border: 1px solid ${color.line};
  border-left: ${({ $tone }) => ($tone ? `4px solid ${$tone}` : `1px solid ${color.line}`)};
  border-radius: 9px;
  background: #fff;
  font-size: 15px;
  font-weight: 600;
  color: ${color.ink};

  p:last-child { font-size: 14px; font-weight: 400; color: ${color.muted}; }
`;

const AddButton = styled.button`
  display: flex;
  align-items: center;
  justify-content: center;
  gap: 7px;
  height: 34px;
  border: 1px dashed #c9bfb8;
  border-radius: 9px;
  background: none;
  font-size: 14px;
  color: ${color.muted};
`;

const lanes = [
  { name: "Drawn", cards: [{ name: "East Anglia", quota: "not set", note: "2 d · no quota", tone: color.brown }] },
  { name: "With a second person", cards: [{ name: "North Germany Q1", quota: "€4.8m", note: "1 d · Ines to approve" }] },
  {
    name: "Sample",
    cards: [
      { name: "Benelux", quota: "€6.0m", note: "Q4", tone: color.green },
      { name: "United Kingdom", quota: "€3.0m", note: "Q4", tone: color.green },
    ],
  },
];

const Stages = () => (
  <Card>
    <CardHead><Icon name="layout" size={20} /><h2>Territories and quotas, by stage</h2></CardHead>
    <CardBody>
      <Note>East Anglia is drawn but has no quota; it goes live once a second person agrees.</Note>
      <Board>
        {lanes.map((lane) => (
          <Lane key={lane.name}>
            <LaneHead><h3>{lane.name}</h3><span>{lane.cards.length}</span></LaneHead>
            {lane.cards.map((c) => (
              <StageCard key={c.name} $tone={c.tone}>
                <p>{c.name}</p>
                <p>{c.quota}</p>
                <p>{c.note}</p>
              </StageCard>
            ))}
            <AddButton><Icon name="plus" size={14} />Add</AddButton>
          </Lane>
        ))}
      </Board>
    </CardBody>
  </Card>
);

/* ---------- status bar ---------- */

const StatusBar = styled.footer`
  display: flex;
  align-items: center;
  gap: 22px;
  height: 47px;
  padding: 0 16px 0 18px;
  border-top: 1px solid ${color.line};
  background: #fff;
  font-size: 15px;
  color: ${color.muted};
`;

const Status = styled.span`
  display: flex;
  align-items: center;
  gap: 8px;
  white-space: nowrap;

  b {
    font-weight: 600;
    font-variant-numeric: tabular-nums;
    color: ${({ $warn }) => ($warn ? color.brown : color.text)};
  }
  svg { ${({ $warn }) => $warn && "color: #9a5a1c;"} }
`;

const StatusEnd = styled.div`
  display: flex;
  align-items: center;
  gap: 27px;
  margin-left: auto;
`;

const Inbox = styled.button`
  position: relative;
  border: 0;
  background: none;
  color: ${color.soft};

  &::after {
    content: "";
    position: absolute;
    top: -3px;
    right: -1px;
    width: 9px;
    height: 9px;
    border-radius: 50%;
    background: ${color.red};
  }
`;

const AskGroup = styled.div`
  display: flex;
  height: 32px;
  margin-left: 8px;
  border-radius: 16px;
  background: ${color.navy};
  color: #fff;

  button {
    display: flex;
    align-items: center;
    gap: 8px;
    padding: 0 14px 0 15px;
    border: 0;
    background: none;
    font-weight: 600;
  }
  button + button { gap: 5px; padding: 0 12px; border-left: 1px solid #5668a3; }
`;

const stats = [
  { icon: "activity", label: "Jobs going", value: "3" },
  { icon: "hourglass", label: "Waiting on an administrator", value: "2", warn: true },
  { icon: "users", label: "People", value: "1,384" },
  { icon: "cpu", label: "Model", value: "Open model, local" },
  { icon: "shield", label: "Engines healthy", value: "14 of 15" },
];

/* ---------- navigation ---------- */

const groups = [
  {
    name: "Overview",
    tint: "#e1e2e9",
    color: color.navy,
    items: [["activity", "Today"], ["heart", "Health"], ["budget", "Use and budgets"], ["approvals", "Approvals", 2], ["cluster", "Cluster"]],
  },
  {
    name: "Platforms and apps",
    tint: "#f8efe0",
    color: color.gold,
    items: [["layers", "Platforms"], ["package", "Domain packs"], ["puzzle", "Apps"], ["mobile", "Mobile"]],
  },
  {
    name: "Working together",
    tint: "#e0e6df",
    color: color.green,
    items: [["sparkles", "Assistant"], ["hash", "Team chat"], ["mail", "Mail"], ["phone", "Calls"], ["store", "Other firms"]],
  },
  {
    name: "Knowledge and decisions",
    tint: "#f0e9dc",
    color: color.olive,
    items: [["file", "Files and search"], ["database", "Memory"], ["book", "Notebooks"], ["idea", "Ideas"], ["scales", "Decision rooms", "lock"], ["policy", "Policies"]],
  },
  { name: "Automation", tint: "#ede3da", color: color.brown, items: [["radio", "Workforce"]] },
];

const systemLinks = [
  ["settings", "Settings"],
  ["sliders", "Running the modules"],
  ["usersCheck", "People and permissions"],
  ["school", "Teaching the assistant"],
  ["drive", "This installation"],
];

const App = () => (
  <>
    <GlobalStyle />
    <Shell>
      <Sidebar>
        <Brand>
          <Logo />
          Adverant Nexus
          <IconButton aria-label="Collapse sidebar"><Icon name="panel" size={20} /></IconButton>
        </Brand>
        <Switcher $kind="org">
          <Avatar>LV</Avatar>
          <SwitcherText><strong>LARKFIELD &amp; VANE</strong>larkfield</SwitcherText>
          <Icon name="chevron" size={16} />
        </Switcher>
        <Switcher $kind="area">
          <Dot $size={11} $color={color.gold} />
          <SwitcherText><strong>Nexus</strong>14 of 22 areas open to you</SwitcherText>
          <Icon name="chevron" size={16} />
        </Switcher>
        <Search>
          <Icon name="search" size={20} />
          <input type="search" placeholder="Go to..." aria-label="Go to" />
          <Kbd>⌘K</Kbd>
        </Search>
        <Nav>
          {groups.map((g) => (
            <Group key={g.name}>
              <GroupButton $tint={g.tint}>
                <Dot $color={g.color} />
                {g.name}
                <Icon name="chevron" size={16} />
              </GroupButton>
              {g.items.map(([icon, label, extra]) => (
                <NavLink key={label} href="#" $locked={extra === "lock"}>
                  <Icon name={icon} />
                  <span>{label}</span>
                  {extra === "lock" && <Icon name="lock" size={17} />}
                  {extra === 2 && <Count>{extra}</Count>}
                </NavLink>
              ))}
            </Group>
          ))}
          <Divider />
          {systemLinks.map(([icon, label]) => (
            <NavLink key={label} href="#" $quiet>
              <Icon name={icon} />
              <span>{label}</span>
            </NavLink>
          ))}
        </Nav>
        <ThemeRow>
          THEME
          <ThemeSwitch>
            <button aria-label="Light"><Icon name="sun" size={19} /></button>
            <button aria-label="Dark"><Icon name="moon" size={19} /></button>
            <button aria-label="System"><Icon name="monitor" size={19} /></button>
          </ThemeSwitch>
        </ThemeRow>
        <Switcher $kind="user">
          <Avatar $outline>PN</Avatar>
          <SwitcherText><strong>Priya Natarajan</strong>priya@larkfield.example</SwitcherText>
          <Icon name="chevron" size={16} />
        </Switcher>
      </Sidebar>

      <Main>
        <JobsBar>
          <Icon name="activity" size={20} />
          <strong>3 jobs running</strong>
          Claims intake, the nightly sync and one agent run
          <IconButton aria-label="Show jobs"><Icon name="chevron" size={16} /></IconButton>
        </JobsBar>
        <Content>
          <PageHead>
            <div>
              <Crumbs aria-label="Breadcrumb"><a href="#">Revenue operations setup</a> › Territories</Crumbs>
              <Title>Territories and quotas</Title>
              <Lead>Territories are drawn on the one map the organisation shares. Quotas are set per period, in euro.</Lead>
            </div>
            <Actions>
              <Button><Icon name="calendar" size={17} />Set a quota period</Button>
              <Button $primary><Icon name="plus" size={16} />Add a territory</Button>
            </Actions>
          </PageHead>
          <Columns $template="1.1fr 1fr">
            <Card>
              <TallHead>
                <Icon name="map" size={20} />
                <div>
                  <h2>Territories on the map</h2>
                  <p>The same map as Map and GeoAI; drawing here adds a territory layer</p>
                </div>
              </TallHead>
              <TerritoryMap />
            </Card>
            <Stack>
              <Territories />
              <Card>
                <CardHead><Icon name="calendarOne" size={20} /><h2>Quota periods</h2></CardHead>
                <Facts>
                  <div><dt>This period</dt><dd>Q4 · 1 Oct to 31 Dec</dd></div>
                  <div><dt>Raising a quota</dt><dd>needs a second person</dd></div>
                </Facts>
              </Card>
              <WonChart />
            </Stack>
          </Columns>
          <Columns $template="1fr 1fr" $last>
            <Forecast />
            <Stages />
          </Columns>
        </Content>
        <StatusBar>
          {stats.map((s) => (
            <Status key={s.label} $warn={s.warn}>
              <Icon name={s.icon} size={18} />
              {s.label} <b>{s.value}</b>
            </Status>
          ))}
          <StatusEnd>
            <Status><Icon name="layers" size={18} />Areas you can open <b>14 of 22</b></Status>
            <Inbox aria-label="Messages"><Icon name="mailOpen" size={20} /></Inbox>
            <AskGroup>
              <button>Ask <Kbd $light>⌘J</Kbd></button>
              <button aria-label="Assistant options">
                <svg width="14" height="16" viewBox="0 0 14 16" fill={color.gold} aria-hidden="true">
                  <path d="M7 1c.7 4.300 2.200 6.200 6 7-3.800.8-5.300 2.700-6 7-.7-4.300-2.200-6.200-6-7 3.800-.8 5.300-2.700 6-7z" />
                </svg>
                <Icon name="chevron" size={16} weight={2} />
              </button>
            </AskGroup>
          </StatusEnd>
        </StatusBar>
      </Main>
    </Shell>
  </>
);

export default App;
